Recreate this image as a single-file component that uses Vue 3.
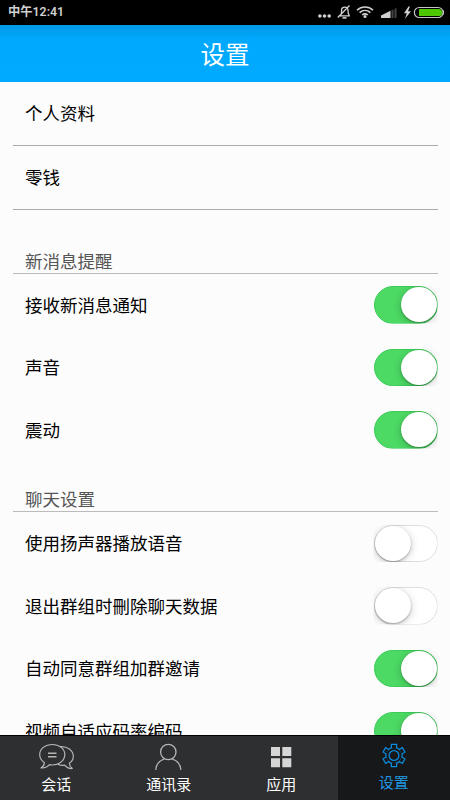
<template>
  <div class="screen">
    <div class="status-bar">
      <span class="time">中午12:41</span>
      <svg class="status-icons" width="132" height="25" viewBox="0 0 132 25">
        <!-- more -->
        <g fill="#d0d0d0">
          <circle cx="1.900" cy="16" r="1.800" />
          <circle cx="6.500" cy="16" r="1.800" />
          <circle cx="11.200" cy="16" r="1.800" />
        </g>
        <!-- muted bell -->
        <g fill="none" stroke="#d0d0d0" stroke-width="1.300">
          <path d="M20.500 15.800h11.500M22.500 15.500c1.200-1.500 1-3 1-5 0-4.500 6.500-4.500 6.500 0 0 2 0 3.500 1.200 5M19.800 17.500L31.500 5.500" />
          <path d="M24.500 17.900h4" stroke-width="1.600" />
        </g>
        <!-- wifi -->
        <g fill="none" stroke="#d0d0d0" stroke-width="1.600">
          <path d="M39 10.200c4.500-4.200 11.500-4.200 16 0M41.600 12.700c3.200-2.900 7.600-2.900 10.800 0M44.200 15c1.900-1.600 3.700-1.600 5.600 0" />
        </g>
        <circle cx="47" cy="16.600" r="1.500" fill="#d0d0d0" />
        <!-- signal -->
        <path d="M63 18v-2.500l9.500-4.700V18z" fill="#d0d0d0" />
        <path d="M73.500 18v-7.600l2-1V18zM76.500 18V8.900l2-1V18z" fill="#444" />
        <!-- charge bolt and battery -->
        <path d="M90.500 6.500L86 13.200h2.800L87 18.800l6-7.600h-3l2-4.700z" fill="#d0d0d0" />
        <rect x="96.400" y="7.500" width="28.600" height="10" rx="4.800" fill="none" stroke="#c4c4c4" stroke-width="1.200" />
        <path d="M101 8.900h19.600a3.600 3.600 0 0 1 0 7.200H101z" fill="#4dc800" />
        <path d="M125.500 10.500v4" stroke="#c4c4c4" stroke-width="1" />
      </svg>
    </div>

    <header class="title-bar">设置</header>

    <main class="content">
      <div v-for="item in links" :key="item" class="link-row">{{ item }}</div>

      <section v-for="group in groups" :key="group.title" class="group">
        <h2 class="group-title">{{ group.title }}</h2>
        <div v-for="item in group.items" :key="item.label" class="switch-row" @click="item.on = !item.on">
          <span class="switch-label">{{ item.label }}</span>
          <span class="switch" :class="{ on: item.on }"><i class="knob"></i></span>
        </div>
      </section>
    </main>

    <nav class="tab-bar">
      <div
        v-for="tab in tabs"
        :key="tab.key"
        class="tab"
        :class="{ active: tab.key === current }"
        @click="current = tab.key"
      >
        <svg v-if="tab.key === 'chat'" class="icon" width="36" height="28" viewBox="0 0 36 28">
          <g fill="none" stroke="#b4b4b4" stroke-width="1.200" stroke-linejoin="round">
            <path d="M14.300 1.500C21.300 1.500 26.800 5.800 26.800 11.500S21.300 22 14.300 22c-1 0-1.900-.1-2.800-.3-2.100 2.500-4.800 3.600-8.500 3.200 2-1.200 3.400-3.200 3.300-5.400C3.300 17.600 1.700 14.800 1.700 11.500 1.700 5.800 7.200 1.500 14.300 1.500z" />
            <path d="M22 3.700c7.200-.8 13.300 3.800 13.300 9.600 0 3-1.500 5.400-4 7 .1 2.300 1.300 4 3 5.200-3.300.4-5.800-.9-7.700-3.300-2.500.4-5 0-6.800-1" />
            <path d="M10 10.300h8.500M10 13.800h8.500" stroke-width="1.500" />
          </g>
        </svg>
        <svg v-else-if="tab.key === 'contacts'" class="icon" width="36" height="28" viewBox="0 0 36 28">
          <g fill="none" stroke="#b4b4b4" stroke-width="1.300">
            <circle cx="17.300" cy="9" r="7.700" />
            <path d="M4.800 27c.3-5.600 3.700-9.400 8.600-11M21.200 16c4.900 1.600 8.300 5.400 8.600 11" />
          </g>
        </svg>
        <svg v-else-if="tab.key === 'apps'" class="icon" width="36" height="28" viewBox="0 0 36 28">
          <path d="M8 4h9v9H8zM19.300 4h9v9h-9zM8 15.300h9v9H8zM19.300 15.300h9v9h-9z" fill="#d6d6d6" />
        </svg>
        <svg v-else class="icon" width="36" height="28" viewBox="0 0 36 28">
          <g fill="none" stroke="#0b8ddf" stroke-width="1.200">
            <circle cx="18" cy="12.500" r="8.200" />
            <circle cx="18" cy="12.500" r="4.900" />
            <path
              v-for="n in 6"
              :key="n"
              d="M15.400 5V1.300h5.200V5"
              fill="#17181a"
              :transform="`rotate(${(n - 1) * 60} 18 12.500)`"
            />
          </g>
        </svg>
        <span class="tab-label">{{ tab.label }}</span>
      </div>
    </nav>
  </div>
</template>

<script setup>
import { reactive, ref } from 'vue'

const links = ['个人资料', '零钱']

const groups = reactive([
  {
    title: '新消息提醒',
    items: [
      { label: '接收新消息通知', on: true },
      { label: '声音', on: true },
      { label: '震动', on: true }
    ]
  },
  {
    title: '聊天设置',
    items: [
      { label: '使用扬声器播放语音', on: false },
      { label: '退出群组时刪除聊天数据', on: false },
      { label: '自动同意群组加群邀请', on: true },
      { label: '视频自适应码率编码', on: true }
    ]
  }
])

const tabs = [
  { key: 'chat', label: '会话' },
  { key: 'contacts', label: '通讯录' },
  { key: 'apps', label: '应用' },
  { key: 'settings', label: '设置' }
]
const current = ref('settings')
</script>

<style>
body {
  margin: 0;
  overflow: hidden;
}
</style>

<style scoped>
.screen {
  display: flex;
  flex-direction: column;
  width: 450px;
  height: 800px;
  overflow: hidden;
  background: #fcfcfc;
  color: #000;
  font-family: "Noto Sans CJK SC", sans-serif;
  font-size: 17.5px;
}

.status-bar {
  display: flex;
  flex: none;
  justify-content: space-between;
  height: 25px;
  background: #000;
}

.time {
  padding-left: 8px;
  color: #cfcfcf;
  font-family: Roboto, "Noto Sans CJK SC", sans-serif;
  font-size: 12.3px;
  font-weight: 600;
  line-height: 25px;
}

.title-bar {
  flex: none;
  box-sizing: border-box;
  height: 57px;
  background: linear-gradient(#0098e4, #00a9fd 14px, #00aaff);
  color: #fff;
  font-size: 24.5px;
  line-height: 57px;
  text-align: center;
}

.content {
  flex: 1;
  min-height: 0;
  padding: 0 12.5px;
  overflow: hidden;
}

.link-row {
  box-sizing: border-box;
  height: 63.75px;
  padding-left: 12.5px;
  border-bottom: 1px solid #aaa;
  line-height: 62px;
}

.group-title {
  display: flex;
  box-sizing: border-box;
  align-items: flex-end;
  height: 51px;
  margin: 0;
  padding-left: 12.5px;
  border-bottom: 1px solid #bbb;
  color: #555;
  font-size: 17.5px;
  font-weight: 400;
  line-height: 24px;
}

.group:first-of-type .group-title {
  height: 64px;
}

.switch-row {
  display: flex;
  align-items: center;
  justify-content: space-between;
  height: 62.5px;
  padding-left: 12.5px;
}

.switch-label {
  line-height: 26px;
}

.switch {
  display: flex;
  box-sizing: border-box;
  width: 64px;
  height: 37.5px;
  border: 1px solid #dedede;
  border-radius: 19px;
  background: #fff;
  /* keeps the knob shadow inside the switch box */
  clip-path: inset(0);
}

.switch.on {
  justify-content: flex-end;
  border-color: #3ccb57;
  background: #4cd964;
}

.knob {
  width: 36px;
  height: 35px;
  border-radius: 50%;
  background: #fff;
  box-shadow: 0 1px 2px rgba(0, 0, 0, .3), 0 2px 8px rgba(0, 0, 0, .2);
}

.tab-bar {
  display: flex;
  flex: none;
  box-sizing: border-box;
  height: 65px;
  border-top: 1px solid #000;
  background: #2e2f31;
}

.tab {
  display: flex;
  flex: 1;
  flex-direction: column;
  align-items: center;
  padding-top: 7px;
  color: #fff;
}

.tab.active {
  background: #17181a;
  color: #2196e0;
}

.icon {
  flex: none;
}

.tab-label {
  font-size: 15px;
  line-height: 25px;
}

.active .tab-label {
  line-height: 22px;
}
</style>
